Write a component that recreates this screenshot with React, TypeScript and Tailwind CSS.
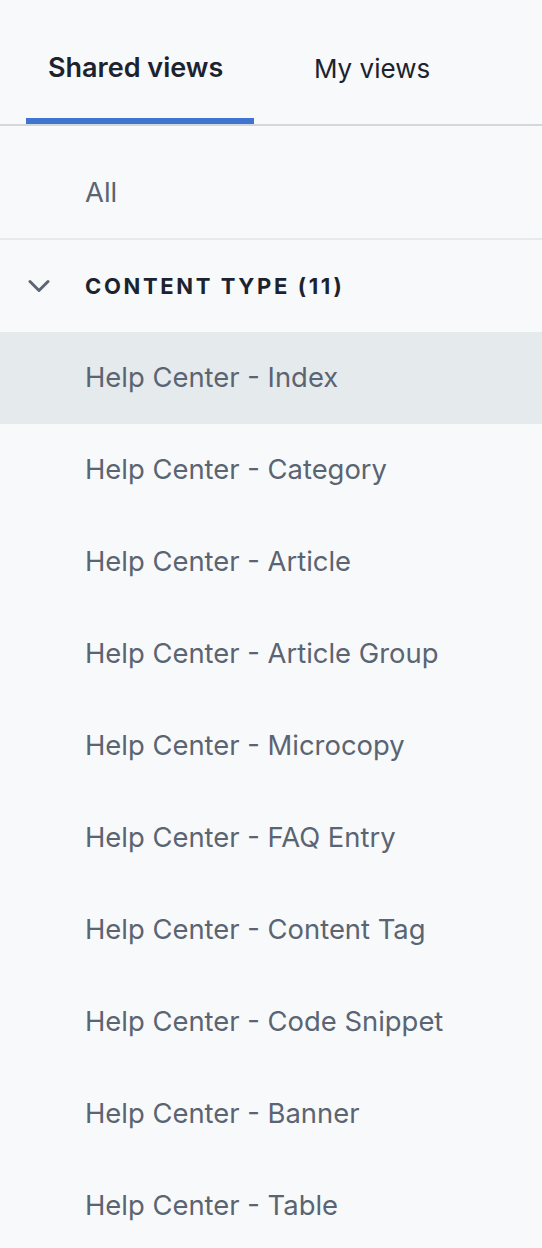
const items = [
  "Help Center - Index",
  "Help Center - Category",
  "Help Center - Article",
  "Help Center - Article Group",
  "Help Center - Microcopy",
  "Help Center - FAQ Entry",
  "Help Center - Content Tag",
  "Help Center - Code Snippet",
  "Help Center - Banner",
  "Help Center - Table",
];

export default function App() {
  return (
    <div
      className="w-[542px] h-[1248px] overflow-hidden bg-[#f7f9fa]"
      style={{ fontFamily: "Inter, 'Noto Sans', sans-serif" }}
    >
      <div className="flex h-[126px] border-b-2 border-[#d3d8dc] px-[26px]">
        <div className="relative flex w-[228px] items-center pl-[22px] pt-[12px] text-[27px] font-semibold text-[#1c2330]">
          Shared views
          <span className="absolute bottom-0 left-0 right-0 h-[6px] bg-[#3f74d1]" />
        </div>
        <div className="flex items-center pl-[60px] pt-[12px] text-[26px] text-[#1c2330]">
          My views
        </div>
      </div>

      <div className="flex h-[114px] items-center border-b-2 border-[#e5eaed] pl-[85px] pt-[22px] text-[27.4px] text-[#5a6472]">
        All
      </div>

      <div className="flex h-[92px] items-center">
        <svg
          className="ml-[28px] h-[14px] w-[22px]"
          viewBox="0 0 22 14"
          fill="none"
          stroke="#5d6673"
          strokeWidth={3}
          strokeLinecap="round"
          strokeLinejoin="round"
        >
          <path d="M2 2.5l9 9 9-9" />
        </svg>
        <span className="ml-[35px] text-[22px] font-bold tracking-[0.12em] text-[#1c2330]">
          CONTENT TYPE (11)
        </span>
      </div>

      <ul>
        {items.map((item, i) => (
          <li
            key={item}
            className={`flex h-[92px] items-center pl-[85px] text-[27.4px] text-[#5a6472] ${
              i === 0 ? "bg-[#e5eaed]" : ""
            }`}
          >
            {item}
          </li>
        ))}
      </ul>
    </div>
  );
}
